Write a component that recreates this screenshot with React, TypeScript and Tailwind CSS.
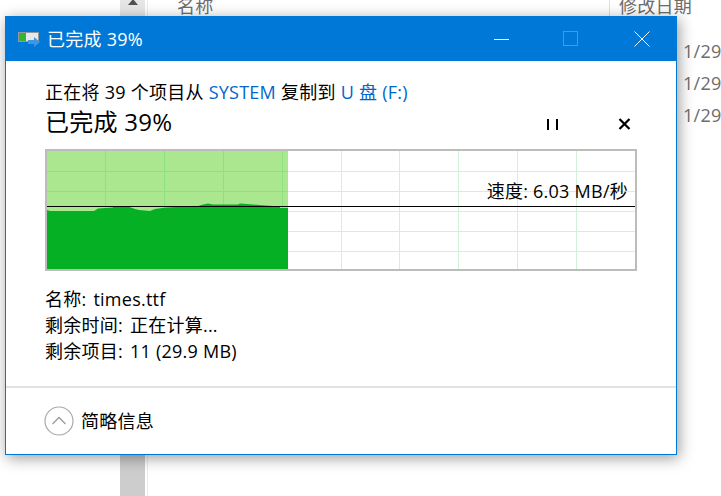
const font = 'font-["Open_Sans","Noto_Sans_CJK_SC",sans-serif] tracking-[0.25px]'

const topEdge = '47,210 50,211 94,211 98,208.5 113,207.5 113,206.5 128,206.5 135,209 139,210 150,211 155,209 166,207.5 198,206 203,204.5 208,203.5 213,204.5 238,204.5 240,203.5 253,204.5 266,205.5 280,206.5 280,208 288,208'
const columnX = [105, 164, 223, 282, 341, 399, 458, 517, 576]
const rowY = [171, 191, 211, 231, 251]

function SpeedChart() {
  return (
    <div className="relative h-[122px] w-[592px] border-2 border-[#bcbcbc] bg-white">
      <svg width="588" height="118" viewBox="47 151 588 118" className="block" shapeRendering="crispEdges">
        {columnX.map((x) => (
          <line key={x} x1={x + 0.5} y1="151" x2={x + 0.5} y2="269" stroke="#d0f1d8" />
        ))}
        {rowY.map((y) => (
          <line key={y} x1="47" y1={y + 0.5} x2="635" y2={y + 0.5} stroke="#d0f1d8" />
        ))}
        <rect x="47" y="151" width="241" height="118" fill="#abe78f" />
        {columnX.slice(0, 4).map((x) => (
          <line key={x} x1={x + 0.5} y1="151" x2={x + 0.5} y2="269" stroke="#8ee27c" />
        ))}
        {rowY.slice(0, 2).map((y) => (
          <line key={y} x1="47" y1={y + 0.5} x2="288" y2={y + 0.5} stroke="#8ee27c" />
        ))}
        <polygon points={`${topEdge} 288,269 47,269`} fill="#06b025" shapeRendering="auto" />
        <line x1="47" y1="206.5" x2="635" y2="206.5" stroke="#000" />
      </svg>
      <span className="absolute right-[7px] top-[27px] text-[18px] leading-[26px] text-black">速度: 6.03 MB/秒</span>
    </div>
  )
}

function CopyIcon() {
  return (
    <svg width="23" height="16" viewBox="0 0 23 16" className="shrink-0">
      <rect x="0.5" y="1.5" width="20" height="9" fill="#e8e8e8" stroke="#8f9aa3" />
      <rect x="1" y="2" width="7" height="8" fill="#35b334" />
      <path d="M10 9h6V6l6 5-6 5v-3h-6z" fill="#3d96e6" />
    </svg>
  )
}

export default function App() {
  return (
    <div className={`relative h-[496px] w-[721px] overflow-hidden bg-white ${font}`}>
      {/* explorer window behind the dialog */}
      <div className="flex h-full text-[#6d6d6d]">
        <div className="ml-[120px] flex h-full w-[25px] shrink-0 flex-col justify-between bg-[#cdcdcd]">
          <div className="flex h-[16px] justify-center bg-[#e6e6e6]">
            <svg width="12" height="6" viewBox="0 0 12 6"><path d="M1 5l5-6 5 6z" fill="#505050" /></svg>
          </div>
        </div>
        <div className="ml-[2px] h-full w-px shrink-0 bg-[#ececec]" />
        <div className="ml-[29px] mt-[-7px] w-[432px] shrink-0 text-[18px] leading-[26px]">名称</div>
        <div className="mt-[-7px] h-[23px] w-px shrink-0 bg-[#e0e0e0]" />
        <div className="ml-[9px] mt-[-7px] flex w-[102px] shrink-0 flex-col text-[18px] leading-[26px]">
          <span>修改日期</span>
          <span className="ml-[64px] mt-[16px] leading-[32px]">1/29</span>
          <span className="ml-[64px] leading-[32px]">1/29</span>
          <span className="ml-[64px] leading-[32px]">1/29</span>
        </div>
      </div>

      {/* copy dialog */}
      <div className="absolute left-[5px] top-[16px] flex h-[439px] w-[672px] flex-col border border-[#0078d7] bg-white shadow-[2px_3px_14px_rgba(0,0,0,0.4)]">
        <div className="flex h-[44px] shrink-0 items-center bg-[#0078d7] pl-[12px] text-white">
          <CopyIcon />
          <span className="ml-[6px] text-[18px] leading-[26px]">已完成 39%</span>
          <svg width="16" height="16" viewBox="0 0 16 16" className="ml-auto"><path d="M0 8.5h15" stroke="#fff" /></svg>
          <svg width="16" height="16" viewBox="0 0 16 16" className="ml-[53px]"><rect x="0.5" y="0.5" width="14" height="14" fill="none" stroke="#3f9be4" /></svg>
          <svg width="16" height="16" viewBox="0 0 16 16" className="ml-[55px] mr-[26px]"><path d="M0.5 0.5l15 15M15.5 0.5l-15 15" stroke="#fff" /></svg>
        </div>

        <div className="flex flex-1 flex-col px-[39px] text-black">
          <div className="mt-[18px] text-[18px] leading-[26px]">
            正在将 39 个项目从 <span className="text-[#0066cc]">SYSTEM</span> 复制到 <span className="text-[#0066cc]">U 盘 (F:)</span>
          </div>
          <div className="flex h-[34px] items-center">
            <span className="text-[24px] leading-[34px]">已完成 39%</span>
            <svg width="12" height="11" viewBox="0 0 12 11" className="ml-auto mt-[4px]"><path d="M1 0h2v11H1zM10 0h2v11h-2z" fill="#000" /></svg>
            <svg width="13" height="12" viewBox="0 0 13 12" className="ml-[60px] mr-[6px] mt-[4px]"><path d="M1.5 1l10 10M11.5 1l-10 10" stroke="#000" strokeWidth="2.2" /></svg>
          </div>
          <div className="mt-[10px]">
            <SpeedChart />
          </div>
          <div className="mt-[15px] text-[18px] leading-[26px]">
            <div>名称: <span className="ml-[2px]">times.ttf</span></div>
            <div>剩余时间: <span className="ml-[2px]">正在计算...</span></div>
            <div>剩余项目: <span className="ml-[2px]">11 (29.9 MB)</span></div>
          </div>
        </div>

        <div className="flex h-[68px] shrink-0 items-center gap-[7px] border-t-2 border-[#e2e2e2] pl-[38px] text-black">
          <svg width="30" height="30" viewBox="0 0 30 30" className="shrink-0">
            <circle cx="15" cy="15" r="14" fill="none" stroke="#a9a9a9" strokeWidth="1.2" />
            <path d="M8.5 18l6.5-6.5 6.5 6.5" fill="none" stroke="#9a9a9a" strokeWidth="1.3" />
          </svg>
          <span className="text-[18px] leading-[26px]">简略信息</span>
        </div>
      </div>
    </div>
  )
}
